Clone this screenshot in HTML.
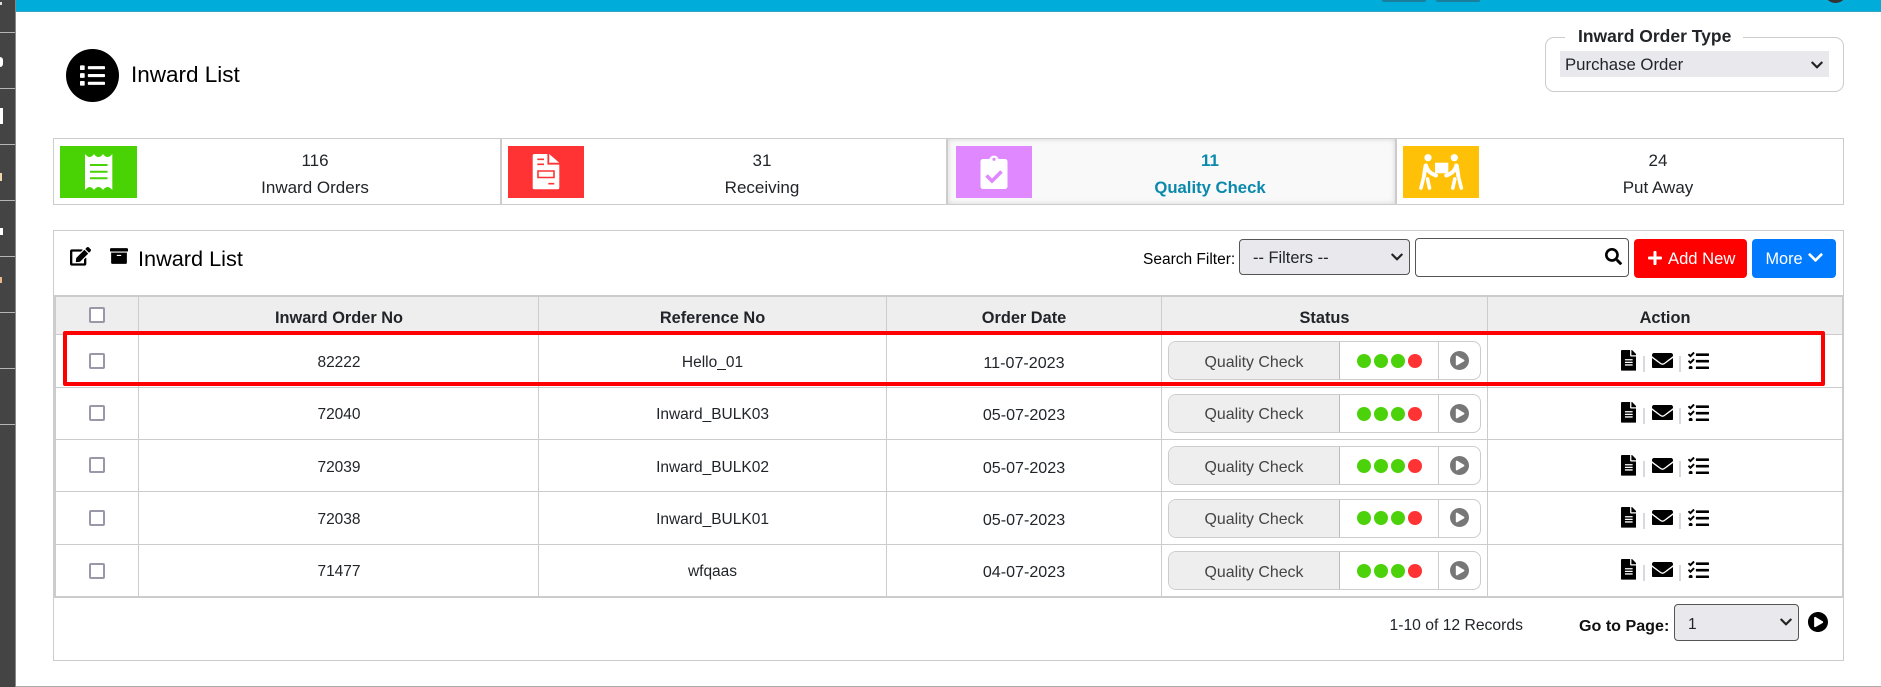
<!DOCTYPE html>
<html>
<head>
<meta charset="utf-8">
<title>Inward List</title>
<style>
html,body{margin:0;padding:0;background:#fff}
body{position:relative;width:1881px;height:687px;overflow:hidden;font-family:"Liberation Sans",Arial,sans-serif;color:#212529}
.a,.t,.c,svg.i{position:absolute}
.t,.c{line-height:20px;height:20px;white-space:nowrap}
.c{text-align:center;transform:translateX(-50%)}
.num{font-size:17px}
.th{font-size:16.35px;font-weight:bold;top:308px}
.td{font-size:15.5px}
.dt{font-size:16.1px}
.hl{position:absolute;background:#ccc;height:1px;left:55px;width:1788px}
.vl{position:absolute;background:#ccc;width:1px;top:297px;height:299px}
.cb{position:absolute;left:88.5px;width:12px;height:12px;border:2px solid #9a98a8;border-radius:2px;background:#fff}
.st{position:absolute;left:1168px;width:311px;height:37px;border:1px solid #ccc;border-radius:8px;background:#fff;overflow:hidden}
.st .l{position:absolute;left:0;top:0;width:170px;height:37px;background:#eee;border-right:1px solid #bbb}
.st .m{position:absolute;left:170px;top:0;width:99px;height:37px;border-right:1px solid #ccc}
.st .q{position:absolute;left:0;width:170px;text-align:center;top:11px;line-height:20px;font-size:15.9px;color:#444}
.dot{position:absolute;top:12px;width:14px;height:14px;border-radius:50%;background:#4cd20a}
.sep{position:absolute;width:2px;height:16px;background:#d8d8e0}
select{appearance:none;-webkit-appearance:none;font-family:"Liberation Sans",Arial,sans-serif;color:#212529;position:absolute;margin:0;background:#e9e9ed;outline:none;box-sizing:border-box}
.side{position:absolute;left:0;top:0;width:15px;height:687px;background:#444;border-right:1px solid #888}
.side i{position:absolute;left:0;width:15px;height:1px;background:#b5b5b5}
.side b{position:absolute;left:0;background:#fff}
.tile{position:absolute;top:146px;height:52px}
</style>
</head>
<body>
<svg width="0" height="0" style="position:absolute">
<defs>
<symbol id="file" viewBox="0 0 384 512"><path d="M224 136V0H24C10.7 0 0 10.7 0 24v464c0 13.3 10.7 24 24 24h336c13.3 0 24-10.7 24-24V160H248c-13.2 0-24-10.8-24-24zm64 236c0 6.6-5.4 12-12 12H108c-6.6 0-12-5.4-12-12v-8c0-6.6 5.4-12 12-12h168c6.6 0 12 5.4 12 12v8zm0-64c0 6.6-5.4 12-12 12H108c-6.6 0-12-5.4-12-12v-8c0-6.6 5.4-12 12-12h168c6.6 0 12 5.4 12 12v8zm0-72v8c0 6.6-5.4 12-12 12H108c-6.6 0-12-5.4-12-12v-8c0-6.6 5.4-12 12-12h168c6.6 0 12 5.4 12 12zm96-114.1v6.1H256V0h6.1c6.4 0 12.5 2.5 17 7l97.9 98c4.5 4.5 7 10.6 7 16.9z"/></symbol>
<symbol id="env" viewBox="0 64 512 384"><path d="M502.3 190.8c3.9-3.1 9.7-.2 9.7 4.7V400c0 26.5-21.5 48-48 48H48c-26.5 0-48-21.5-48-48V195.6c0-5 5.7-7.8 9.7-4.7 22.4 17.4 52.1 39.5 154.1 113.6 21.1 15.4 56.7 47.8 92.2 47.6 35.7.3 72-32.8 92.3-47.6 102-74.1 131.6-96.3 154-113.7zM256 320c23.2.4 56.6-29.2 73.4-41.4 132.7-96.3 142.8-104.7 173.4-128.7 5.8-4.5 9.2-11.5 9.2-18.9v-19c0-26.5-21.5-48-48-48H48C21.5 64 0 85.5 0 112v19c0 7.4 3.4 14.3 9.2 18.9 30.6 23.9 40.7 32.4 173.4 128.7 16.8 12.2 50.2 41.8 73.4 41.4z"/></symbol>
<symbol id="tasks" viewBox="0 32 512 432"><path d="M139.61 35.5a12 12 0 0 0-17 0L58.93 98.81l-22.7-22.12a12 12 0 0 0-17 0L3.53 92.41a12 12 0 0 0 0 17l47.59 47.4a12.78 12.78 0 0 0 17.61 0l15.59-15.62L156.52 69a12.09 12.09 0 0 0 .09-17zm0 159.19a12 12 0 0 0-17 0l-63.68 63.72-22.7-22.1a12 12 0 0 0-17 0L3.53 252a12 12 0 0 0 0 17L51 316.5a12.77 12.77 0 0 0 17.6 0l15.7-15.69 72.2-72.22a12 12 0 0 0 .09-16.9zM64 368c-26.49 0-48.59 21.5-48.59 48S37.53 464 64 464a48 48 0 0 0 0-96zm432 16H208a16 16 0 0 0-16 16v32a16 16 0 0 0 16 16h288a16 16 0 0 0 16-16v-32a16 16 0 0 0-16-16zm0-320H208a16 16 0 0 0-16 16v32a16 16 0 0 0 16 16h288a16 16 0 0 0 16-16V80a16 16 0 0 0-16-16zm0 160H208a16 16 0 0 0-16 16v32a16 16 0 0 0 16 16h288a16 16 0 0 0 16-16v-32a16 16 0 0 0-16-16z"/></symbol>
<symbol id="play" viewBox="8 8 496 496"><path d="M256 8C119 8 8 119 8 256s111 248 248 248 248-111 248-248S393 8 256 8zm115.7 272l-176 101c-15.8 8.8-35.7-2.5-35.7-21V152c0-18.4 19.8-29.8 35.7-21l176 107c16.4 9.2 16.4 32.9 0 42z"/></symbol>
<symbol id="chev" viewBox="0 0 448 512"><path d="M207.029 381.476L12.686 187.132c-9.373-9.373-9.373-24.569 0-33.941l22.667-22.667c9.357-9.357 24.522-9.375 33.901-.04L224 284.505l154.745-154.021c9.379-9.335 24.544-9.317 33.901.04l22.667 22.667c9.373 9.373 9.373 24.569 0 33.941L240.971 381.476c-9.373 9.372-24.569 9.372-33.942 0z"/></symbol>
</defs>
</svg>

<!-- sidebar -->
<div class="side">
<i style="top:32px"></i><i style="top:88px"></i><i style="top:144px"></i><i style="top:200px"></i><i style="top:256px"></i><i style="top:312px"></i><i style="top:368px"></i><i style="top:424px"></i>
<b style="top:2px;width:2px;height:3px;background:#ddd"></b>
<b style="top:57px;width:3px;height:10px;border-radius:0 4px 4px 0"></b>
<b style="top:108px;width:3px;height:16px"></b>
<b style="top:173px;width:2px;height:8px;background:#f2d6b0"></b>
<b style="top:228px;width:3px;height:7px"></b>
<b style="top:277px;width:2px;height:6px;background:#e8b98a"></b>
</div>

<!-- top bar -->
<div class="a" style="left:16px;top:0;width:1865px;height:11px;background:#00acd9;border-bottom:1px solid #35a5c5"></div>
<div class="a" style="left:1382px;top:0;width:44px;height:2px;background:#1a7f9c;border-radius:0 0 3px 3px"></div>
<div class="a" style="left:1436px;top:0;width:44px;height:2px;background:#1a7f9c;border-radius:0 0 3px 3px"></div>
<div class="a" style="left:1824px;top:-20px;width:23px;height:23px;border-radius:50%;background:#333"></div>

<!-- page header -->
<div class="a" style="left:66px;top:49px;width:53px;height:53px;border-radius:50%;background:#000"></div>
<svg class="i" style="left:80px;top:63px" width="25" height="25" viewBox="0 0 512 512" fill="#fff"><path d="M80 368H16a16 16 0 0 0-16 16v64a16 16 0 0 0 16 16h64a16 16 0 0 0 16-16v-64a16 16 0 0 0-16-16zm0-320H16A16 16 0 0 0 0 64v64a16 16 0 0 0 16 16h64a16 16 0 0 0 16-16V64a16 16 0 0 0-16-16zm0 160H16a16 16 0 0 0-16 16v64a16 16 0 0 0 16 16h64a16 16 0 0 0 16-16v-64a16 16 0 0 0-16-16zm416 176H176a16 16 0 0 0-16 16v32a16 16 0 0 0 16 16h320a16 16 0 0 0 16-16v-32a16 16 0 0 0-16-16zm0-320H176a16 16 0 0 0-16 16v32a16 16 0 0 0 16 16h320a16 16 0 0 0 16-16V80a16 16 0 0 0-16-16zm0 160H176a16 16 0 0 0-16 16v32a16 16 0 0 0 16 16h320a16 16 0 0 0 16-16v-32a16 16 0 0 0-16-16z"/></svg>
<div class="t" style="left:131px;top:65px;font-size:22.5px;color:#000">Inward List</div>

<!-- order type -->
<div class="a" style="left:1545px;top:37px;width:297px;height:53px;border:1px solid #ccc;border-radius:9px"></div>
<div class="a" style="left:1565px;top:30px;width:178px;height:14px;background:#fff"></div>
<div class="t" style="left:1578px;top:26px;font-size:17.5px;font-weight:bold">Inward Order Type</div>
<select style="left:1560px;top:51px;width:269px;height:26px;border:0;padding:0 0 0 5px;font-size:16.75px"><option>Purchase Order</option></select>
<svg class="i" style="left:1811px;top:58px" width="12" height="14" fill="#222"><use href="#chev"/></svg>

<!-- stat strip -->
<div class="a" style="left:53px;top:138px;width:1789px;height:65px;border:1px solid #ccc"></div>
<div class="a" style="left:948px;top:139px;width:447px;height:65px;background:#f9f9f9;box-shadow:inset 0 0 6px rgba(0,0,0,.15)"></div>
<div class="a" style="left:500px;top:139px;width:2px;height:65px;background:#ccc"></div>
<div class="a" style="left:946px;top:139px;width:2px;height:65px;background:#ccc"></div>
<div class="a" style="left:1395px;top:139px;width:2px;height:65px;background:#ccc"></div>

<div class="tile" style="left:60px;width:77px;background:#49d305"></div>
<svg class="i" style="left:60px;top:146px" width="77" height="52" viewBox="0 0 77 52">
<path fill="#fff" d="M25 8 L25 8 Q27.5 11 29.5 11 Q32 11 34 8 Q36 11 38.5 11 Q41 11 43 8 Q45 11 47.5 11 Q50 11 52.3 8 L52.3 44 Q50 41 47.5 41 Q45 41 43 44 Q41 41 38.5 41 Q36 41 34 44 Q32 41 29.5 41 Q27.5 41 25 44Z"/>
<path stroke="#49d305" stroke-width="2" d="M30 19H47.5M30 25.7H47.5M30 32.3H47.5"/>
</svg>

<div class="tile" style="left:508px;width:76px;background:#ff3333"></div>
<svg class="i" style="left:508px;top:146px" width="76" height="52" viewBox="0 0 76 52">
<path fill="#fff" d="M26.5 8H39.4V18.6H51.3V41.8a1.5 1.5 0 0 1-1.5 1.5H26.2a1.5 1.5 0 0 1-1.5-1.5V9.5A1.5 1.5 0 0 1 26.5 8ZM41.2 8L51.3 16.8H41.2Z"/>
<path stroke="#ff3333" stroke-width="1.6" fill="none" d="M29.3 13.3H36M29.3 18.3H36M30 25H46V31.5H30ZM40.3 37.7H46.3"/>
</svg>

<div class="tile" style="left:956px;width:76px;background:#df88ff"></div>
<svg class="i" style="left:956px;top:146px" width="76" height="52" viewBox="0 0 76 52">
<path fill="#fff" d="M27 13H33.5A4.7 4.7 0 0 1 42.5 13H49A2.5 2.5 0 0 1 51.5 15.5V40.5A2.5 2.5 0 0 1 49 43H27A2.5 2.5 0 0 1 24.5 40.5V15.5A2.5 2.5 0 0 1 27 13Z"/>
<circle cx="38" cy="13.3" r="1.6" fill="#df88ff"/>
<path d="M30.5 29.5L36 35L45.5 25.5" stroke="#df88ff" stroke-width="3.6" fill="none"/>
</svg>

<div class="tile" style="left:1403px;width:76px;background:#ffc107"></div>
<svg class="i" style="left:1403px;top:146px" width="76" height="52" viewBox="0 0 76 52">
<g fill="#fff"><circle cx="25" cy="11.7" r="3.6"/><circle cx="51.3" cy="11.7" r="3.6"/><rect x="32" y="16.7" width="13.3" height="10.6"/></g>
<g fill="none" stroke="#fff" stroke-width="4" stroke-linecap="round" stroke-linejoin="round">
<path d="M23 19.5C24 24 27 27.5 33 29.5M53.3 19.5C52.3 24 49.3 27.5 43.3 29.5"/>
<path d="M22.5 20L21 30M53.8 20L55.3 30"/>
<path d="M20.5 32L18 42M24.5 33L26.5 42M55.8 32L58.3 42M51.8 33L49.8 42" stroke-width="3.6"/>
</g>
</svg>

<div class="c num" style="left:315px;top:151px">116</div>
<div class="c num" style="left:315px;top:178px">Inward Orders</div>
<div class="c num" style="left:762px;top:151px">31</div>
<div class="c num" style="left:762px;top:178px">Receiving</div>
<div class="c num" style="left:1210px;top:151px;font-weight:bold;color:#0b89ad">11</div>
<div class="c num" style="left:1210px;top:178px;font-weight:bold;color:#0b89ad;font-size:16.7px">Quality Check</div>
<div class="c num" style="left:1658px;top:151px">24</div>
<div class="c num" style="left:1658px;top:178px">Put Away</div>

<!-- panel -->
<div class="a" style="left:53px;top:230px;width:1789px;height:429px;border:1px solid #ccc"></div>

<svg class="i" style="left:70px;top:247px" width="21" height="18.7" viewBox="0 0 576 512"><path d="M402.6 83.2l90.2 90.2c3.8 3.8 3.8 10 0 13.8L274.4 405.6l-92.8 10.3c-12.4 1.4-22.9-9.1-21.5-21.5l10.3-92.8L388.8 83.2c3.8-3.8 10-3.8 13.8 0zm162-22.9l-48.8-48.8c-15.2-15.2-39.9-15.2-55.2 0l-35.4 35.4c-3.8 3.8-3.8 10 0 13.8l90.2 90.2c3.8 3.8 10 3.8 13.8 0l35.4-35.4c15.2-15.3 15.2-40 0-55.2zM384 346.2V448H64V128h229.8c3.2 0 6.2-1.3 8.5-3.5l40-40c7.6-7.6 2.2-20.5-8.5-20.5H48C21.5 64 0 85.5 0 112v352c0 26.5 21.5 48 48 48h352c26.5 0 48-21.5 48-48V306.2c0-10.7-12.9-16-20.5-8.5l-40 40c-2.2 2.3-3.5 5.3-3.5 8.5z"/></svg>
<svg class="i" style="left:110px;top:248px" width="18" height="16" viewBox="0 32 512 448"><path d="M32 448c0 17.7 14.3 32 32 32h384c17.7 0 32-14.3 32-32V160H32v288zm160-212c0-6.6 5.4-12 12-12h104c6.6 0 12 5.4 12 12v8c0 6.6-5.4 12-12 12H204c-6.6 0-12-5.4-12-12v-8zM480 32H32C14.3 32 0 46.3 0 64v48c0 8.8 7.2 16 16 16h480c8.8 0 16-7.2 16-16V64c0-17.7-14.3-32-32-32z"/></svg>
<div class="t" style="left:138px;top:249px;font-size:21.7px;color:#000">Inward List</div>

<div class="t" style="left:1143px;top:250px;font-size:15.5px;color:#000">Search Filter:</div>
<select style="left:1239px;top:239px;width:171px;height:36px;border:1px solid #555;border-radius:4px;padding:2px 0 0 13px;font-size:16.4px"><option>-- Filters --</option></select>
<svg class="i" style="left:1391px;top:250px" width="12" height="14" fill="#222"><use href="#chev"/></svg>
<div class="a" style="left:1415px;top:238px;width:212px;height:37px;border:1px solid #555;border-radius:4px;background:#fff"></div>
<svg class="i" style="left:1604.5px;top:248px" width="17" height="17" viewBox="0 0 512 512"><path d="M505 442.7L405.3 343c-4.5-4.5-10.6-7-17-7H372c27.6-35.3 44-79.7 44-128C416 93.1 322.9 0 208 0S0 93.1 0 208s93.1 208 208 208c48.3 0 92.7-16.4 128-44v16.3c0 6.4 2.5 12.5 7 17l99.7 99.7c9.4 9.4 24.6 9.4 33.9 0l28.3-28.3c9.4-9.4 9.4-24.6.1-34zM208 336c-70.7 0-128-57.2-128-128 0-70.7 57.2-128 128-128 70.7 0 128 57.2 128 128 0 70.7-57.2 128-128 128z"/></svg>
<div class="a" style="left:1634px;top:239px;width:113px;height:39px;background:#f00;border-radius:4px"></div>
<svg class="i" style="left:1648px;top:250px" width="14" height="16" viewBox="0 32 448 448" fill="#fff"><path d="M416 208H272V64c0-17.67-14.33-32-32-32h-32c-17.67 0-32 14.33-32 32v144H32c-17.67 0-32 14.33-32 32v32c0 17.67 14.33 32 32 32h144v144c0 17.67 14.33 32 32 32h32c17.67 0 32-14.33 32-32V304h144c17.67 0 32-14.33 32-32v-32c0-17.67-14.33-32-32-32z"/></svg>
<div class="t" style="left:1668px;top:249px;font-size:16.6px;color:#fff">Add New</div>
<div class="a" style="left:1752px;top:239px;width:84px;height:39px;background:#007bff;border-radius:4px"></div>
<div class="t" style="left:1765.5px;top:249px;font-size:16.3px;color:#fff">More</div>
<svg class="i" style="left:1808px;top:249px" width="15" height="17" fill="#fff"><use href="#chev"/></svg>

<!-- table -->
<div class="a" style="left:55px;top:297px;width:1788px;height:37px;background:#eee"></div>
<div class="a" style="left:54px;top:295px;width:1790px;height:2px;background:#ccc"></div>
<div class="a" style="left:54px;top:295px;width:2px;height:303px;background:#ccc"></div>
<div class="a" style="left:1842px;top:295px;width:2px;height:303px;background:#ccc"></div>
<div class="a" style="left:54px;top:596px;width:1790px;height:2px;background:#ccc"></div>
<div class="hl" style="top:334px"></div>
<div class="hl" style="top:387px"></div>
<div class="hl" style="top:439px"></div>
<div class="hl" style="top:491px"></div>
<div class="hl" style="top:544px"></div>
<div class="vl" style="left:138px"></div>
<div class="vl" style="left:538px"></div>
<div class="vl" style="left:886px"></div>
<div class="vl" style="left:1161px"></div>
<div class="vl" style="left:1487px"></div>

<div class="cb" style="top:307px"></div>
<div class="c th" style="left:339px">Inward Order No</div>
<div class="c th" style="left:712.5px">Reference No</div>
<div class="c th" style="left:1024px">Order Date</div>
<div class="c th" style="left:1324.5px">Status</div>
<div class="c th" style="left:1665px">Action</div>

<!-- row 1 -->
<div class="cb" style="top:353px"></div>
<div class="c td" style="left:339px;top:353px">82222</div>
<div class="c td" style="left:712.5px;top:353px">Hello_01</div>
<div class="c td dt" style="left:1024px;top:353px">11-07-2023</div>
<div class="st" style="top:341px"><div class="l"></div><div class="m"></div><div class="q">Quality Check</div><i class="dot" style="left:188px"></i><i class="dot" style="left:205px"></i><i class="dot" style="left:222px"></i><i class="dot" style="left:239px;background:#ff3333"></i><svg class="i" style="left:281px;top:9px" width="19" height="19" fill="#777"><use href="#play"/></svg></div>
<svg class="i" style="left:1620.5px;top:350px" width="15.6" height="20.8"><use href="#file"/></svg><i class="sep" style="left:1643px;top:356px"></i>
<svg class="i" style="left:1652px;top:352.5px" width="21" height="15.8"><use href="#env"/></svg><i class="sep" style="left:1679px;top:356px"></i>
<svg class="i" style="left:1688px;top:351.5px" width="21" height="17.8"><use href="#tasks"/></svg>

<!-- row 2 -->
<div class="cb" style="top:405px"></div>
<div class="c td" style="left:339px;top:405px">72040</div>
<div class="c td" style="left:712.5px;top:405px">Inward_BULK03</div>
<div class="c td dt" style="left:1024px;top:405px">05-07-2023</div>
<div class="st" style="top:394px"><div class="l"></div><div class="m"></div><div class="q" style="top:10px">Quality Check</div><i class="dot" style="left:188px"></i><i class="dot" style="left:205px"></i><i class="dot" style="left:222px"></i><i class="dot" style="left:239px;background:#ff3333"></i><svg class="i" style="left:281px;top:9px" width="19" height="19" fill="#777"><use href="#play"/></svg></div>
<svg class="i" style="left:1620.5px;top:402px" width="15.6" height="20.8"><use href="#file"/></svg><i class="sep" style="left:1643px;top:408px"></i>
<svg class="i" style="left:1652px;top:404.5px" width="21" height="15.8"><use href="#env"/></svg><i class="sep" style="left:1679px;top:408px"></i>
<svg class="i" style="left:1688px;top:403.5px" width="21" height="17.8"><use href="#tasks"/></svg>

<!-- row 3 -->
<div class="cb" style="top:457px"></div>
<div class="c td" style="left:339px;top:458px">72039</div>
<div class="c td" style="left:712.5px;top:458px">Inward_BULK02</div>
<div class="c td dt" style="left:1024px;top:458px">05-07-2023</div>
<div class="st" style="top:446px"><div class="l"></div><div class="m"></div><div class="q">Quality Check</div><i class="dot" style="left:188px"></i><i class="dot" style="left:205px"></i><i class="dot" style="left:222px"></i><i class="dot" style="left:239px;background:#ff3333"></i><svg class="i" style="left:281px;top:9px" width="19" height="19" fill="#777"><use href="#play"/></svg></div>
<svg class="i" style="left:1620.5px;top:455px" width="15.6" height="20.8"><use href="#file"/></svg><i class="sep" style="left:1643px;top:461px"></i>
<svg class="i" style="left:1652px;top:457.5px" width="21" height="15.8"><use href="#env"/></svg><i class="sep" style="left:1679px;top:461px"></i>
<svg class="i" style="left:1688px;top:456.5px" width="21" height="17.8"><use href="#tasks"/></svg>

<!-- row 4 -->
<div class="cb" style="top:510px"></div>
<div class="c td" style="left:339px;top:510px">72038</div>
<div class="c td" style="left:712.5px;top:510px">Inward_BULK01</div>
<div class="c td dt" style="left:1024px;top:510px">05-07-2023</div>
<div class="st" style="top:499px"><div class="l"></div><div class="m"></div><div class="q" style="top:10px">Quality Check</div><i class="dot" style="left:188px;top:11px"></i><i class="dot" style="left:205px;top:11px"></i><i class="dot" style="left:222px;top:11px"></i><i class="dot" style="left:239px;top:11px;background:#ff3333"></i><svg class="i" style="left:281px;top:8px" width="19" height="19" fill="#777"><use href="#play"/></svg></div>
<svg class="i" style="left:1620.5px;top:507px" width="15.6" height="20.8"><use href="#file"/></svg><i class="sep" style="left:1643px;top:513px"></i>
<svg class="i" style="left:1652px;top:509.5px" width="21" height="15.8"><use href="#env"/></svg><i class="sep" style="left:1679px;top:513px"></i>
<svg class="i" style="left:1688px;top:508.5px" width="21" height="17.8"><use href="#tasks"/></svg>

<!-- row 5 -->
<div class="cb" style="top:563px"></div>
<div class="c td" style="left:339px;top:562px">71477</div>
<div class="c td" style="left:712.5px;top:562px">wfqaas</div>
<div class="c td dt" style="left:1024px;top:562px">04-07-2023</div>
<div class="st" style="top:551px"><div class="l"></div><div class="m"></div><div class="q">Quality Check</div><i class="dot" style="left:188px"></i><i class="dot" style="left:205px"></i><i class="dot" style="left:222px"></i><i class="dot" style="left:239px;background:#ff3333"></i><svg class="i" style="left:281px;top:9px" width="19" height="19" fill="#777"><use href="#play"/></svg></div>
<svg class="i" style="left:1620.5px;top:559px" width="15.6" height="20.8"><use href="#file"/></svg><i class="sep" style="left:1643px;top:565px"></i>
<svg class="i" style="left:1652px;top:561.5px" width="21" height="15.8"><use href="#env"/></svg><i class="sep" style="left:1679px;top:565px"></i>
<svg class="i" style="left:1688px;top:560.5px" width="21" height="17.8"><use href="#tasks"/></svg>

<!-- highlight -->
<div class="a" style="left:63px;top:331px;width:1754px;height:47px;border:4px solid #f00;border-radius:2px"></div>

<!-- footer -->
<div class="t" style="left:1389.5px;top:616px;font-size:15.7px">1-10 of 12 Records</div>
<div class="t" style="left:1579px;top:616px;font-size:16.1px;font-weight:bold;color:#111">Go to Page:</div>
<select style="left:1674px;top:604px;width:125px;height:37px;border:1px solid #555;border-radius:4px;padding:3px 0 0 13px;font-size:15.5px"><option>1</option></select>
<svg class="i" style="left:1780px;top:615px" width="12" height="14" fill="#222"><use href="#chev"/></svg>
<svg class="i" style="left:1807.5px;top:612px" width="20" height="20" fill="#000"><use href="#play"/></svg>

<div class="a" style="left:16px;top:686px;width:1865px;height:1px;background:#aaa"></div>
</body>
</html>
